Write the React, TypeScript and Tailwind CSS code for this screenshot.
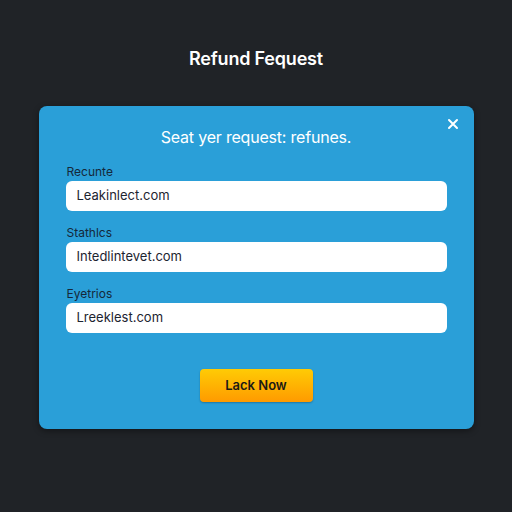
import React from 'react';

const fields = [
  { label: 'Recunte', value: 'Leakinlect.com' },
  { label: 'Stathlcs', value: 'Intedlintevet.com' },
  { label: 'Eyetrios', value: 'Lreeklest.com' },
];

const App: React.FC = () => {
  return (
    <div className="w-[512px] h-[512px] bg-[#202327] flex flex-col items-center font-['Inter',sans-serif]">
      <h1 className="mt-[46px] text-[18px] leading-[26px] font-semibold text-white tracking-[-0.2px]">
        Refund Fequest
      </h1>
      <div className="relative mt-[34px] w-[435px] bg-[#2a9fd8] rounded-[8px] px-[27px] pt-[20px] pb-[27px] shadow-[0_2px_6px_rgba(0,0,0,0.4)]">
        <button className="absolute right-[14px] top-[11px] text-white">
          <svg width="14" height="14" viewBox="0 0 14 14" fill="none" stroke="currentColor" strokeWidth="2" strokeLinecap="round">
            <path d="M3 3 L11 11 M11 3 L3 11" />
          </svg>
        </button>
        <p className="text-center text-white text-[16px] leading-[22px] tracking-[-0.2px]">Seat yer request: refunes.</p>
        <div className="mt-[16px] flex flex-col gap-[14px]">
          {fields.map((f) => (
            <div key={f.label} className="flex flex-col">
              <label className="text-[12px] leading-[16px] text-[#15283a] pl-[1px]">{f.label}</label>
              <div className="mt-[1px] h-[30px] bg-white rounded-[6px] flex items-center px-[11px] text-[13px] text-[#1d2430]">
                {f.value}
              </div>
            </div>
          ))}
        </div>
        <div className="flex justify-center mt-[36px]">
          <button className="w-[113px] h-[33px] rounded-[4px] bg-gradient-to-b from-[#ffcb05] to-[#ff9a00] text-[13px] font-semibold text-[#1c1a14] shadow-[0_1px_2px_rgba(0,0,0,0.25)]">
            Lack Now
          </button>
        </div>
      </div>
    </div>
  );
};

export default App;
